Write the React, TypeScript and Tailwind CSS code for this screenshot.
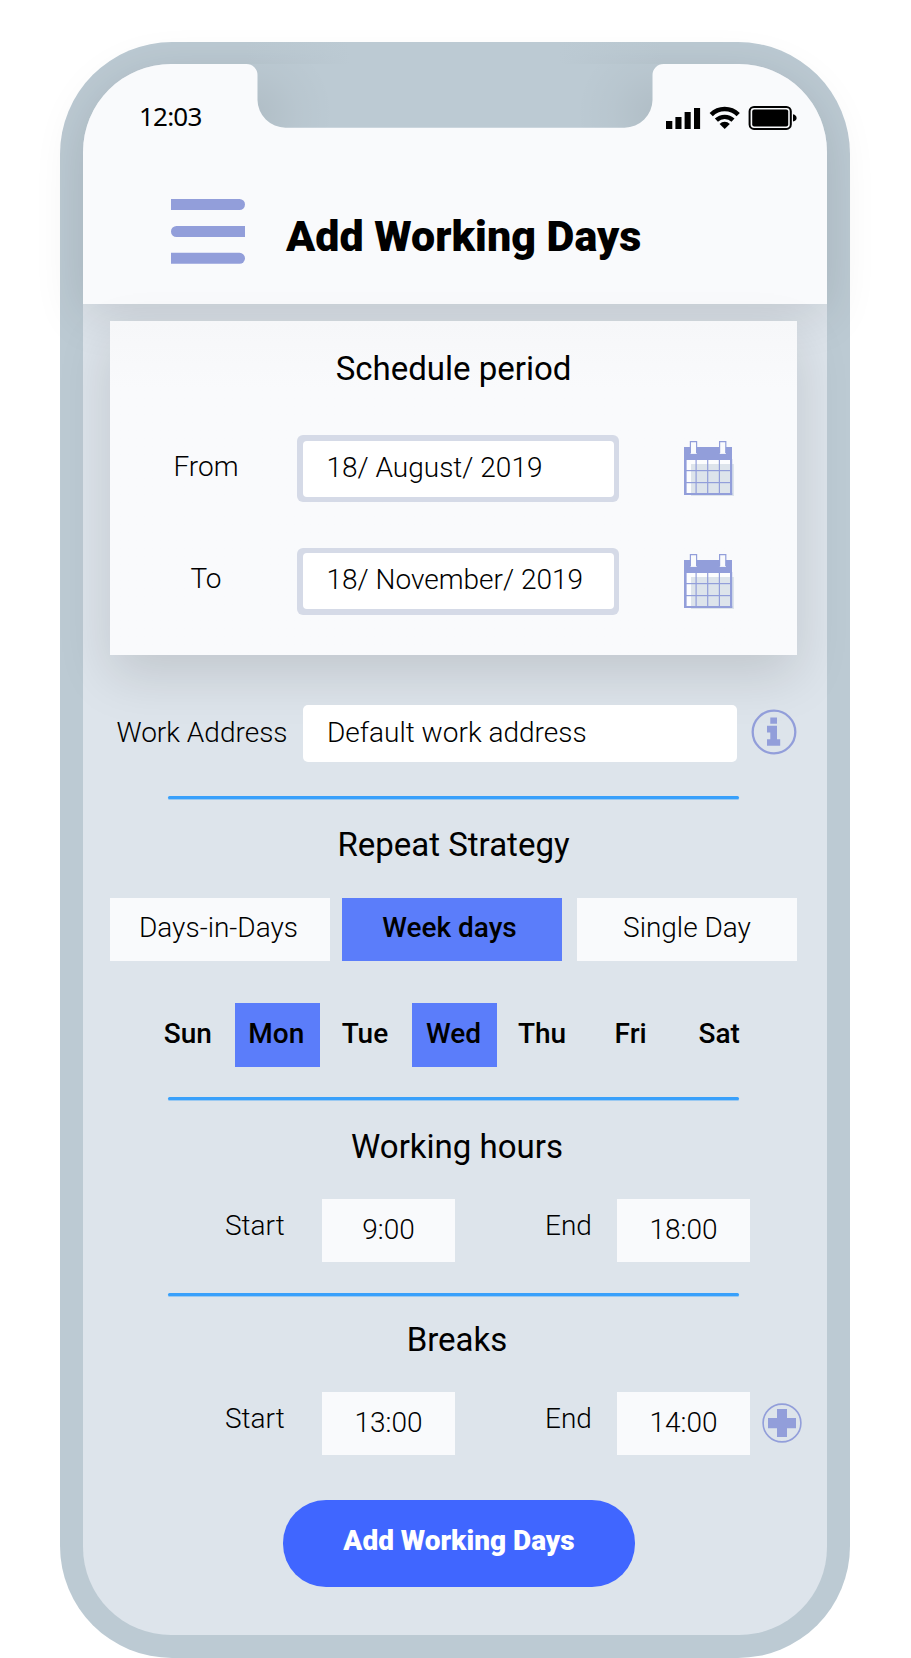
import type { ReactNode } from "react";

function HamburgerIcon() {
  return (
    <svg width="74" height="66" viewBox="0 0 74 66" fill="#929eda">
      <path d="M0 0H68.5a5.5 5.5 0 0 1 0 11H0Z" />
      <path d="M74 27H5.5a5.5 5.5 0 0 0 0 11H74Z" />
      <path d="M0 53.8H68.5a5.5 5.5 0 0 1 0 11H0Z" />
    </svg>
  );
}

function Notch() {
  return (
    <svg className="absolute left-[163px] top-[-22px]" width="418" height="86" viewBox="0 -21 418 86">
      <defs>
        <linearGradient id="bezelFade" x1="0" x2="1" y1="0" y2="0">
          <stop offset="0" stopColor="#bccad3" stopOpacity="0" />
          <stop offset="0.25" stopColor="#bccad3" />
          <stop offset="0.75" stopColor="#bccad3" />
          <stop offset="1" stopColor="#bccad3" stopOpacity="0" />
        </linearGradient>
        <radialGradient id="notchL" gradientUnits="userSpaceOnUse" cx="8" cy="50" r="80">
          <stop offset="0.1" stopColor="#000" stopOpacity="0.055" />
          <stop offset="0.55" stopColor="#000" stopOpacity="0.02" />
          <stop offset="1" stopColor="#000" stopOpacity="0" />
        </radialGradient>
        <radialGradient id="notchR" gradientUnits="userSpaceOnUse" cx="410" cy="50" r="80">
          <stop offset="0.1" stopColor="#000" stopOpacity="0.055" />
          <stop offset="0.55" stopColor="#000" stopOpacity="0.02" />
          <stop offset="1" stopColor="#000" stopOpacity="0" />
        </radialGradient>
      </defs>
      <rect x="0" y="-21" width="418" height="22" fill="url(#bezelFade)" />
      {["#bccad3", "url(#notchL)", "url(#notchR)"].map((fill) => (
        <path
          key={fill}
          fill={fill}
          d="M0.5 1A11 11 0 0 1 11.5 12V37A28 28 0 0 0 39.5 64.7H378.5A28 28 0 0 0 406.5 37V12A11 11 0 0 1 417.5 1Z"
        />
      ))}
    </svg>
  );
}

function StatusIcons() {
  return (
    <svg width="132" height="26" viewBox="0 0 132 26" fill="#000">
      <rect x="0" y="16" width="6.3" height="8" />
      <rect x="9.4" y="12" width="6.1" height="12" />
      <rect x="18.6" y="7" width="6.1" height="17" />
      <rect x="28" y="3" width="6.1" height="21" />
      <g fill="none" stroke="#000" strokeWidth="4.6">
        <path d="M45.2 9.6a19.2 19.2 0 0 1 27 0" />
        <path d="M50.4 15.2a11.9 11.9 0 0 1 16.6 0" strokeWidth="4.4" />
      </g>
      <path d="M53.6 18.9a7.4 7.4 0 0 1 10.2 0l-5.1 5Z" />
      <rect x="83.6" y="1.9" width="41.2" height="22" rx="4.4" fill="none" stroke="#000" strokeWidth="2" />
      <rect x="86.2" y="4.4" width="36" height="17" rx="2" />
      <path d="M127 9.2q3.6 1 3.6 3.7t-3.6 3.7Z" />
    </svg>
  );
}

function CalendarIcon() {
  return (
    <svg width="52" height="56" viewBox="0 0 52 56">
      <rect x="2" y="18" width="44" height="34" fill="#fcfdfe" />
      <rect x="7" y="23" width="43" height="32" fill="#dde4eb" />
      <g fill="#929eda">
        <rect x="0" y="6" width="48" height="13" />
        <rect x="0" y="18" width="2.6" height="36" />
        <rect x="46" y="18" width="2.2" height="36" />
        <rect x="0" y="52" width="48.2" height="2" />
        <rect x="11.5" y="18" width="1.2" height="35" />
        <rect x="23.1" y="18" width="1.2" height="35" />
        <rect x="34.8" y="18" width="1.2" height="35" />
        <rect x="1" y="29" width="46" height="1.2" />
        <rect x="1" y="41" width="46" height="1.2" />
      </g>
      <rect x="6.6" y="0.9" width="6" height="12" fill="#fafbfd" />
      <rect x="35.8" y="0.9" width="6" height="12" fill="#fafbfd" />
      <path d="M6.4 12V0.6H12.6V12M35.6 12V0.6H41.8V12" fill="none" stroke="#929eda" strokeWidth="1.2" />
    </svg>
  );
}

function InfoIcon() {
  return (
    <svg width="46" height="46" viewBox="0 0 46 46">
      <circle cx="23" cy="23" r="21.3" fill="none" stroke="#929eda" strokeWidth="2.3" />
      <path d="M19.3 8.5h6.7v6.2h-6.7zM16 16.7h10v13.5h3.2v6.6H16v-6.6h3.3v-6.8H16z" fill="#929eda" />
    </svg>
  );
}

function PlusIcon() {
  return (
    <svg width="40" height="40" viewBox="0 0 40 40">
      <circle cx="20" cy="20" r="18.9" fill="none" stroke="#929eda" strokeWidth="1.6" />
      <path d="M15 6h10v9h9v10.3h-9V34H15v-8.7h-9V15h9z" fill="#929eda" />
    </svg>
  );
}

function SectionTitle({ children }: { children: ReactNode }) {
  return <h2 className="text-center text-[33px] leading-[40px] font-normal">{children}</h2>;
}

function Divider() {
  return (
    <div className="ml-[85px] h-[3px] w-[571px] rounded-full bg-[#38a0fb] shadow-[0_1px_0_rgba(56,160,251,0.4)]" />
  );
}

function DateRow({ label, value }: { label: string; value: string }) {
  return (
    <div className="flex h-[67px] items-center">
      <span className="w-[187px] pb-1 pl-[5px] text-center">{label}</span>
      <div className="h-[67px] w-[322px] rounded-[6px] bg-[#d5dae7] p-[5.5px]">
        <div className="flex h-full items-center rounded-[4px] bg-white pb-[2px] pl-6">{value}</div>
      </div>
      <div className="ml-[65px] mt-[1px]">
        <CalendarIcon />
      </div>
    </div>
  );
}

function HoursRow({ start, end, action }: { start: string; end: string; action?: ReactNode }) {
  return (
    <div className="flex h-[63px] items-center">
      <span className="w-[239px] pb-[9px] pl-[142px]">Start</span>
      <span className="flex h-full w-[133px] items-center justify-center bg-[#f9fafc] pb-[2px]">{start}</span>
      <span className="w-[162px] pb-[9px] pl-[90px]">End</span>
      <span className="flex h-full w-[133px] items-center justify-center bg-[#f9fafc] pb-[2px]">{end}</span>
      {action && <span className="ml-3 mt-[-2px]">{action}</span>}
    </div>
  );
}

const DAYS = ["Sun", "Mon", "Tue", "Wed", "Thu", "Fri", "Sat"];
const ACTIVE_DAYS = ["Mon", "Wed"];

export default function App() {
  return (
    <div className="h-[1658px] w-[911px] overflow-hidden bg-white pl-[60px] pt-[42px] font-['Roboto',sans-serif] text-black">
      <div className="h-[1616px] w-[790px] rounded-[112px] bg-[#bccad3] pl-[23px] pt-[22px]">
        <div className="h-[1571px] w-[744px] rounded-[88px] bg-[#dde4eb] text-[28px] leading-[34px] font-light">
          <header className="relative h-[240px] rounded-t-[88px] bg-[#f9fafc] shadow-[0_10px_50px_rgba(0,0,0,0.12)]">
            <Notch />
            <div className="flex h-[135px] justify-between pl-14 pr-[29px]">
              <span className="pt-[37px] font-['Noto_Sans',sans-serif] text-[26px] leading-[30px] font-normal tracking-[-0.8px]">
                12:03
              </span>
              <div className="pt-[41px]">
                <StatusIcons />
              </div>
            </div>
            <div className="flex items-start pl-[88px]">
              <HamburgerIcon />
              <h1 className="ml-[41px] mt-3 text-[43px] leading-[50px] font-black">Add Working Days</h1>
            </div>
          </header>

          <section className="relative ml-[27px] mt-[17px] h-[334px] w-[687px] bg-gradient-to-b from-[#f6f7f9] to-[#f9fafc] to-20% pt-7 shadow-[0_20px_50px_rgba(0,0,0,0.13)]">
            <SectionTitle>Schedule period</SectionTitle>
            <div className="mt-[46px] flex flex-col gap-[45.5px]">
              <DateRow label="From" value="18/ August/ 2019" />
              <DateRow label="To" value="18/ November/ 2019" />
            </div>
          </section>

          <div className="relative mt-[50px] flex h-[57px] items-center">
            <span className="w-[220px] pb-[2px] pl-[33.5px]">Work Address</span>
            <div className="flex h-full w-[434px] items-center rounded-[5px] bg-white pb-[2px] pl-6">
              Default work address
            </div>
            <div className="ml-[14px] mt-[-4px]">
              <InfoIcon />
            </div>
          </div>

          <div className="mt-[34px]">
            <Divider />
          </div>

          <div className="mt-[25.5px] pr-[3px]">
            <SectionTitle>Repeat Strategy</SectionTitle>
          </div>
          <div className="mt-[33.5px] flex h-[63px] pl-[27px]">
            <button className="h-full w-[220px] bg-[#f9fafc] pb-[3px] pr-[3px] font-light">Days-in-Days</button>
            <button className="ml-[12px] h-full w-[220px] bg-[#5b7dfa] pb-[3px] pr-[5px] font-medium">Week days</button>
            <button className="ml-[15px] h-full w-[220px] bg-[#f9fafc] pb-[3px] font-light">Single Day</button>
          </div>

          <div className="ml-[61.5px] mt-[42px] grid h-[64px] w-[620px] grid-cols-7 font-medium">
            {DAYS.map((day) => (
              <button
                key={day}
                className={
                  ACTIVE_DAYS.includes(day)
                    ? "mx-[2px] bg-[#5b7dfa] pb-[2px] pr-[2px]"
                    : "mx-[2px] pb-[2px] pr-[2px]"
                }
              >
                {day}
              </button>
            ))}
          </div>

          <div className="mt-[30px]">
            <Divider />
          </div>
          <div className="mt-[26.5px] pl-1">
            <SectionTitle>Working hours</SectionTitle>
          </div>
          <div className="mt-[32.5px]">
            <HoursRow start="9:00" end="18:00" />
          </div>

          <div className="mt-[31px]">
            <Divider />
          </div>
          <div className="mt-[24px] pl-1">
            <SectionTitle>Breaks</SectionTitle>
          </div>
          <div className="mt-8">
            <HoursRow start="13:00" end="14:00" action={<PlusIcon />} />
          </div>

          <button className="ml-[200px] mt-[45px] h-[87px] w-[352px] rounded-[43px] bg-[#4066ff] pb-[6px] font-black text-white">
            Add Working Days
          </button>
        </div>
      </div>
    </div>
  );
}
